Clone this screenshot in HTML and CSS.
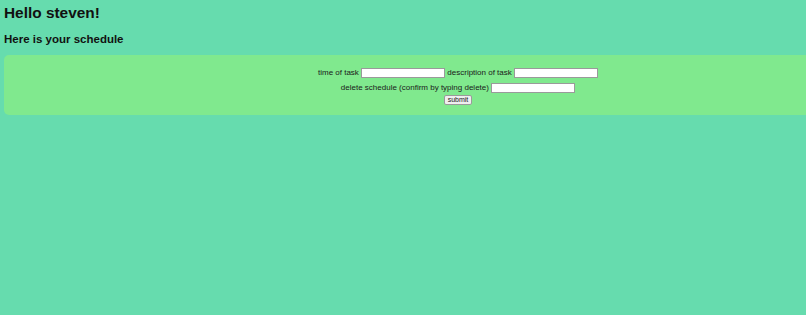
FILE: index.html
```html
<!DOCTYPE html>
<html>
<head>
<meta charset="utf-8">
<link rel="stylesheet" href="styles.css">
</head>
<body>
<h1 class="title">Hello steven!</h1>
<h2 class="subtitle">Here is your schedule</h2>
<div class="panel">
  <form class="form">
    <div class="row">time of task <input class="field" type="text"> description of task <input class="field" type="text"></div>
    <div class="row">delete schedule (confirm by typing delete) <input class="field" type="text"></div>
    <div class="row row-btn"><button class="btn" type="button">submit</button></div>
  </form>
</div>
</body>
</html>
```
FILE: styles.css
```css
html { background: #66dcae; }
body {
  margin: 4px 0 4px 4px;
  font-family: "Liberation Sans", Arial, sans-serif;
  color: #000;
}
.title {
  font-size: 15.4px;
  font-weight: bold;
  margin: 0;
  line-height: 18px;
  color: #111;
}
.subtitle {
  font-size: 11.5px;
  font-weight: bold;
  margin: 10px 0 0;
  line-height: 14px;
  color: #111;
}
.panel {
  margin-top: 9px;
  padding: 10px 0 10px 106px;
  background: #80e98e;
  border-radius: 5px 0 0 5px;
  text-align: center;
  font-size: 8px;
  color: #1a1a1a;
}
.form { margin: 0; }
.row {
  line-height: 15px;
}
.row-btn {
  line-height: 10px;
  height: 10px;
}
.field {
  width: 80px;
  height: 8px;
  padding: 0 1px;
  border: 1px solid #9a9a9a;
  background: #fff;
  font-size: 7px;
  vertical-align: middle;
  margin: 0;
  box-sizing: content-box;
}
.btn {
  font-family: "Liberation Sans", Arial, sans-serif;
  font-size: 7px;
  padding: 0 3px;
  height: 10px;
  line-height: 8px;
  border: 1px solid #9a9a9a;
  border-radius: 2px;
  background: #efefef;
  color: #1a1a1a;
  vertical-align: top;
}
```
